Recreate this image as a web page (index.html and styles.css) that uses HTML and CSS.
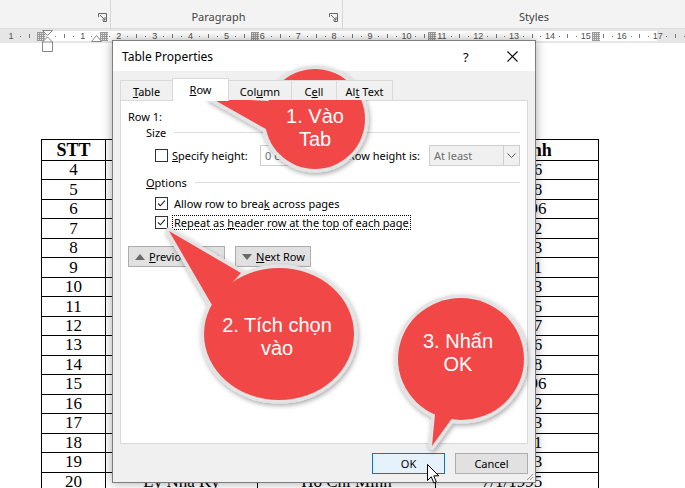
FILE: index.html
```html
<!DOCTYPE html>
<html lang="vi">
<head>
<meta charset="utf-8">
<title>Table Properties</title>
<link rel="stylesheet" href="styles.css">
</head>
<body>
<div class="ribbon">
  <div class="grp g1">
    <svg class="launch" viewBox="0 0 9 9"><path d="M0.5 4 V0.5 H8.5 V8.5 H5" fill="none" stroke="#666"/><path d="M2 2 L7 7 M7 4 V7 H4" fill="none" stroke="#666"/></svg>
  </div>
  <div class="grp g2">
    <span class="glabel">Paragraph</span>
    <svg class="launch" viewBox="0 0 9 9"><path d="M0.5 4 V0.5 H8.5 V8.5 H5" fill="none" stroke="#666"/><path d="M2 2 L7 7 M7 4 V7 H4" fill="none" stroke="#666"/></svg>
  </div>
  <div class="grp g3"><span class="glabel">Styles</span></div>
</div>

<div class="ruler">
  <div class="rtrack">
    <div class="rc"><span class="rn">1</span><i class="d"></i><i class="t"></i><i class="d"></i></div>
    <div class="rc"><span class="rn"></span><i class="d"></i><i class="t"></i><i class="d"></i></div>
    <div class="rc"><span class="rn">1</span><i class="d"></i><i class="t"></i><i class="d"></i></div>
    <div class="rc"><span class="rn">2</span><i class="d"></i><i class="t"></i><i class="d"></i></div>
    <div class="rc"><span class="rn">3</span><i class="d"></i><i class="t"></i><i class="d"></i></div>
    <div class="rc"><span class="rn">4</span><i class="d"></i><i class="t"></i><i class="d"></i></div>
    <div class="rc"><span class="rn">5</span><i class="d"></i><i class="t"></i><i class="d"></i></div>
    <div class="rc"><span class="rn">6</span><i class="d"></i><i class="t"></i><i class="d"></i></div>
    <div class="rc"><span class="rn">7</span><i class="d"></i><i class="t"></i><i class="d"></i></div>
    <div class="rc"><span class="rn">8</span><i class="d"></i><i class="t"></i><i class="d"></i></div>
    <div class="rc"><span class="rn">9</span><i class="d"></i><i class="t"></i><i class="d"></i></div>
    <div class="rc"><span class="rn">10</span><i class="d"></i><i class="t"></i><i class="d"></i></div>
    <div class="rc"><span class="rn">11</span><i class="d"></i><i class="t"></i><i class="d"></i></div>
    <div class="rc"><span class="rn">12</span><i class="d"></i><i class="t"></i><i class="d"></i></div>
    <div class="rc"><span class="rn">13</span><i class="d"></i><i class="t"></i><i class="d"></i></div>
    <div class="rc"><span class="rn">14</span><i class="d"></i><i class="t"></i><i class="d"></i></div>
    <div class="rc"><span class="rn">15</span><i class="d"></i><i class="t"></i><i class="d"></i></div>
    <div class="rc"><span class="rn">16</span><i class="d"></i><i class="t"></i><i class="d"></i></div>
    <div class="rc"><span class="rn">17</span><i class="d"></i><i class="t"></i><i class="d"></i></div>
  </div>
  <span class="hatch h1"></span>
  <span class="hatch h2"></span>
  <span class="hatch h3"></span>
  <span class="hatch h4"></span>
  <span class="hatch h5"></span>
  <svg class="indent" viewBox="0 0 11 22"><path d="M0.5 0.5 H10.5 L5.5 5.5 Z" fill="#fff" stroke="#888"/><path d="M5.5 7 L10.5 12 V21.5 H0.5 V12 Z" fill="#fff" stroke="#888"/><path d="M0.5 12 H10.5" stroke="#888"/></svg>
  <svg class="rindent" viewBox="0 0 11 7"><path d="M5.5 0.5 L10.5 6.5 H0.5 Z" fill="#fff" stroke="#888"/></svg>
</div>

<div class="page">
  <table class="tbl">
    <tr class="hd"><td class="c1">STT</td><td class="c2">Họ và tên</td><td class="c3">Quê quán</td><td class="c4">Năm sinh</td></tr>
    <tr><td>4</td><td>Nguyễn Văn An</td><td>Hà Nội</td><td>5/6/1996</td></tr>
    <tr><td>5</td><td>Trần Thị Bình</td><td>Hải Phòng</td><td>2/9/1998</td></tr>
    <tr><td>6</td><td>Lê Văn Cường</td><td>Đà Nẵng</td><td>12/3/1996</td></tr>
    <tr><td>7</td><td>Phạm Thị Dung</td><td>Huế</td><td>3/8/1992</td></tr>
    <tr><td>8</td><td>Hoàng Văn Em</td><td>Nghệ An</td><td>9/2/1993</td></tr>
    <tr><td>9</td><td>Vũ Thị Hoa</td><td>Nam Định</td><td>4/4/1991</td></tr>
    <tr><td>10</td><td>Đặng Văn Hùng</td><td>Thái Bình</td><td>6/5/1993</td></tr>
    <tr><td>11</td><td>Bùi Thị Lan</td><td>Cần Thơ</td><td>1/7/1995</td></tr>
    <tr><td>12</td><td>Đỗ Văn Long</td><td>Quảng Ninh</td><td>8/3/1997</td></tr>
    <tr><td>13</td><td>Ngô Thị Mai</td><td>Bắc Ninh</td><td>5/6/1996</td></tr>
    <tr><td>14</td><td>Dương Văn Nam</td><td>Hà Nam</td><td>2/9/1998</td></tr>
    <tr><td>15</td><td>Lý Thị Oanh</td><td>Lạng Sơn</td><td>12/3/1996</td></tr>
    <tr><td>16</td><td>Trịnh Văn Phúc</td><td>Thanh Hóa</td><td>3/8/1992</td></tr>
    <tr><td>17</td><td>Đinh Thị Quỳnh</td><td>Ninh Bình</td><td>9/2/1993</td></tr>
    <tr><td>18</td><td>Mai Văn Sơn</td><td>Vĩnh Phúc</td><td>4/4/1991</td></tr>
    <tr><td>19</td><td>Tạ Thị Thu</td><td>Hà Tĩnh</td><td>6/5/1993</td></tr>
    <tr><td>20</td><td>Lý Nhã Kỳ</td><td>Hồ Chí Minh</td><td>7/1/1995</td></tr>
  </table>
</div>

<div class="dialog">
  <div class="titlebar">
    <span class="title">Table Properties</span>
    <span class="help">?</span>
    <svg class="close" viewBox="0 0 11 11"><path d="M0.5 0.5 L10.5 10.5 M10.5 0.5 L0.5 10.5" stroke="#000" stroke-width="1.1"/></svg>
  </div>
  <div class="dbody">
    <div class="tabs">
      <div class="tab t-table"><span><u>T</u>able</span></div>
      <div class="tab t-row sel"><span><u>R</u>ow</span></div>
      <div class="tab t-col"><span>Col<u>u</u>mn</span></div>
      <div class="tab t-cell"><span>C<u>e</u>ll</span></div>
      <div class="tab t-alt"><span>Al<u>t</u> Text</span></div>
    </div>
    <div class="panel">
      <div class="rowlbl">Row 1:</div>
      <div class="grouphead">Size</div>
      <div class="sizerow">
        <span class="cb"></span>
        <span class="lbl-spec"><u>S</u>pecify height:</span>
        <span class="inp">0 cm</span>
        <span class="lbl-rh">Row height is:</span>
        <span class="sel-box"><span class="sel-val">At least</span><span class="sel-arrow"><svg viewBox="0 0 9 5"><path d="M0.5 0.5 L4.5 4.5 L8.5 0.5" fill="none" stroke="#555"/></svg></span></span>
      </div>
      <div class="grouphead opt"><span><u>O</u>ptions</span></div>
      <div class="optrow">
        <span class="cb on"><svg viewBox="0 0 13 13"><path d="M2.5 6.5 L5.2 9.2 L10.5 3.2" fill="none" stroke="#222" stroke-width="1.3"/></svg></span>
        <span class="opttxt">Allow row to brea<u>k</u> across pages</span>
      </div>
      <div class="optrow">
        <span class="cb on"><svg viewBox="0 0 13 13"><path d="M2.5 6.5 L5.2 9.2 L10.5 3.2" fill="none" stroke="#222" stroke-width="1.3"/></svg></span>
        <span class="opttxt focus">Repeat as <u>h</u>eader row at the top of each page</span>
      </div>
      <div class="navrow">
        <span class="btn nav prev"><svg class="tri" viewBox="0 0 10 6"><path d="M0 6 L5 0 L10 6 Z" fill="#6a6a6a"/></svg><span><u>P</u>revious Row</span></span>
        <span class="btn nav next"><svg class="tri" viewBox="0 0 10 6"><path d="M0 0 L10 0 L5 6 Z" fill="#6a6a6a"/></svg><span><u>N</u>ext Row</span></span>
      </div>
    </div>
    <div class="actions">
      <span class="btn act ok">OK</span>
      <span class="btn act">Cancel</span>
    </div>
  </div>
  <svg class="grip" viewBox="0 0 10 10"><path d="M9 3 L3 9 M9 6 L6 9" stroke="#999"/></svg>
</div>

<svg class="bubbles" viewBox="0 0 685 488">
  <defs>
    <filter id="sh" x="-20%" y="-20%" width="140%" height="140%">
      <feDropShadow dx="1" dy="2" stdDeviation="2.5" flood-color="#000" flood-opacity="0.35"/>
    </filter>
  </defs>
  <g filter="url(#sh)">
    <g class="rim">
      <circle cx="315" cy="119" r="50"/>
      <polygon points="211,98 268,101 273,133"/>
      <ellipse cx="279" cy="334" rx="75" ry="66"/>
      <polygon points="169,231 212,305 241,273"/>
      <ellipse cx="461" cy="359" rx="63" ry="61"/>
      <polygon points="432,446 436,404 458,410"/>
    </g>
    <g class="fill">
      <circle cx="315" cy="119" r="50"/>
      <polygon points="211,98 268,101 273,133"/>
      <ellipse cx="279" cy="334" rx="75" ry="66"/>
      <polygon points="169,231 212,305 241,273"/>
      <ellipse cx="461" cy="359" rx="63" ry="61"/>
      <polygon points="432,446 436,404 458,410"/>
    </g>
  </g>
</svg>
<div class="btext bt1">1. Vào<br>Tab</div>
<div class="btext bt2">2. Tích chọn<br>vào</div>
<div class="btext bt3">3. Nhấn<br>OK</div>

<svg class="cursor" viewBox="0 0 13 21"><path d="M0.5 0.5 V16.5 L4.3 12.8 L6.8 19 L9.3 18 L6.8 11.8 H11.8 Z" fill="#fff" stroke="#000" stroke-linejoin="round"/></svg>
</body>
</html>
```

FILE: styles.css
```css
* { box-sizing: border-box; }
html, body { margin: 0; padding: 0; }
body {
  width: 685px;
  height: 488px;
  overflow: hidden;
  position: relative;
  background: #fff;
  font-family: "Noto Sans", "Open Sans", sans-serif;
}

/* ribbon */
.ribbon {
  display: flex;
  height: 29px;
  background: #f3f3f3;
  border-bottom: 1px solid #dcdcdc;
}
.grp {
  position: relative;
  display: flex;
  align-items: flex-end;
  justify-content: center;
  padding-bottom: 4px;
  font-size: 11px;
  color: #444;
}
.g1 { width: 111px; border-right: 1px solid #d6d6d6; }
.g2 { width: 232px; border-right: 1px solid #d6d6d6; padding-right: 16px; }
.g3 { flex: 1; padding-left: 40px; }
.launch {
  position: absolute;
  right: 3px;
  bottom: 6px;
  width: 9px;
  height: 9px;
}
.g2 .launch { right: 4px; }

/* ruler */
.ruler {
  position: relative;
  height: 14px;
  background: #e6e6e6;
}
.rtrack {
  display: flex;
  height: 14px;
  padding-left: 6.6px;
  background: linear-gradient(to right, transparent 47px, #fff 47px, #fff 657px, transparent 657px) 0 2px / 100% 10px no-repeat;
}
.rc {
  flex: 0 0 35.9px;
  display: grid;
  grid-template-columns: repeat(4, 1fr);
  align-items: center;
  justify-items: center;
}
.rn {
  font-family: "Liberation Sans", sans-serif;
  font-size: 9px;
  color: #505050;
  line-height: 14px;
}
.rc .d { width: 1px; height: 1px; background: #777; }
.rc .t { width: 1px; height: 4px; background: #777; }
.hatch {
  position: absolute;
  top: 3px;
  width: 8px;
  height: 9px;
  margin-left: -4px;
  background:
    repeating-linear-gradient(to right, #999 0 1px, transparent 1px 2px),
    repeating-linear-gradient(to bottom, #999 0 1px, #e6e6e6 1px 2px);
}
.h1 { left: 41px; }
.h2 { left: 104px; }
.h3 { left: 255px; }
.h4 { left: 432px; }
.h5 { left: 596px; }
.indent {
  position: absolute;
  left: 42px;
  top: 1px;
  width: 11px;
  height: 22px;
}
.rindent {
  position: absolute;
  left: 91px;
  top: 6px;
  width: 11px;
  height: 7px;
}

/* document table */
.page {
  padding: 96px 0 0 41px;
}
.tbl {
  border-collapse: collapse;
  font-family: "Liberation Serif", serif;
  font-size: 17px;
  table-layout: fixed;
  width: 557px;
}
.tbl td {
  border: 1px solid #000;
  padding: 0;
  text-align: center;
  height: 19.47px;
  line-height: 18px;
  white-space: nowrap;
  overflow: hidden;
}
.tbl td:last-child { padding-right: 10px; }
.tbl .hd td { height: 21px; font-weight: bold; font-size: 18px; }
.tbl .hd td:last-child { padding-right: 4px; }
.c1 { width: 64px; }
.c2 { width: 152px; }
.c3 { width: 178px; }
.c4 { width: 163px; }

/* dialog */
.dialog {
  position: absolute;
  left: 112px;
  top: 40px;
  width: 424px;
  height: 443px;
  border: 1px solid #7d7d7d;
  background: #f0f0f0;
  box-shadow: 0 0 10px rgba(0,0,0,0.35);
  font-size: 11px;
  color: #000;
}
.titlebar {
  position: relative;
  height: 30px;
  background: #fff;
  display: flex;
  align-items: center;
  padding-left: 9px;
}
.title { font-size: 12px; }
.help {
  position: absolute;
  left: 350px;
  top: 7px;
  font-size: 13px;
}
.close {
  position: absolute;
  left: 394px;
  top: 10px;
  width: 11px;
  height: 11px;
}
.dbody {
  padding: 7px 7px 0 7px;
}
.tabs {
  display: flex;
  align-items: flex-end;
  height: 22px;
  position: relative;
  z-index: 2;
}
.tab {
  height: 20px;
  border: 1px solid #d9d9d9;
  border-bottom: none;
  margin-right: -1px;
  background: #f0f0f0;
  display: flex;
  align-items: center;
  justify-content: center;
  padding-top: 1px;
}
.tab.sel {
  height: 23px;
  background: #fff;
  margin-bottom: -1px;
  position: relative;
  z-index: 3;
  padding-bottom: 2px;
}
.t-table { width: 53px; }
.t-row { width: 57px; }
.t-col { width: 64px; }
.t-cell { width: 46px; }
.t-alt { width: 57px; }
.panel {
  height: 344px;
  background: #fff;
  border: 1px solid #d9d9d9;
  padding: 8px 7px 0 7px;
}
.rowlbl { height: 15px; line-height: 15px; }
.grouphead {
  display: flex;
  align-items: center;
  height: 14px;
  margin-top: 1px;
  padding-left: 18px;
}
.grouphead::after {
  content: "";
  flex: 1;
  height: 1px;
  background: #dcdcdc;
  margin-left: 8px;
}
.grouphead.opt { margin-top: 9px; }
.sizerow {
  display: flex;
  align-items: center;
  height: 21px;
  margin-top: 6px;
  padding-left: 27px;
}
.cb {
  flex: 0 0 13px;
  width: 13px;
  height: 13px;
  border: 1px solid #333;
  background: #fff;
  margin-right: 4px;
  display: flex;
}
.cb svg { width: 11px; height: 11px; }
.lbl-spec { width: 88px; }
.inp {
  width: 70px;
  height: 21px;
  border: 1px solid #cfcfcf;
  background: #fff;
  color: #6d6d6d;
  padding-left: 4px;
  line-height: 19px;
}
.lbl-rh { flex: 1; text-align: right; padding-right: 9px; }
.sel-box {
  width: 91px;
  height: 21px;
  border: 1px solid #cfcfcf;
  background: #f0f0f0;
  display: flex;
  color: #6d6d6d;
}
.sel-val { flex: 1; padding-left: 4px; line-height: 19px; }
.sel-arrow {
  width: 16px;
  border-left: 1px solid #cfcfcf;
  display: flex;
  align-items: center;
  justify-content: center;
}
.sel-arrow svg { width: 9px; height: 5px; }
.optrow {
  display: flex;
  align-items: center;
  height: 19px;
  padding-left: 27px;
}
.grouphead.opt + .optrow { margin-top: 5px; }
.opttxt { padding: 0 1px; line-height: 13px; border: 1px solid transparent; }
.opttxt.focus { border: 1px dotted #000; }
.navrow {
  display: flex;
  gap: 10px;
  margin-top: 14px;
}
.btn {
  height: 21px;
  background: #e1e1e1;
  border: 1px solid #adadad;
  display: flex;
  align-items: center;
  justify-content: center;
}
.nav { justify-content: flex-start; padding-left: 6px; }
.prev { width: 97px; }
.next { width: 76px; }
.tri { width: 10px; height: 6px; margin-right: 4px; }
.actions {
  display: flex;
  justify-content: flex-end;
  gap: 10px;
  margin-top: 9px;
}
.act { width: 73px; }
.ok { background: #e5f1fb; border-color: #0078d7; }
.grip {
  position: absolute;
  right: 1px;
  bottom: 1px;
  width: 10px;
  height: 10px;
}

/* callouts */
.bubbles {
  position: absolute;
  left: 0;
  top: 0;
  width: 685px;
  height: 488px;
}
.rim * { fill: #e3e3e3; stroke: #e3e3e3; stroke-width: 7; stroke-linejoin: round; }
.fill * { fill: #f24747; }
.btext {
  position: absolute;
  width: 160px;
  text-align: center;
  color: #fff;
  font-family: "Liberation Sans", Arial, sans-serif;
  font-size: 20px;
  line-height: 23px;
}
.bt1 { left: 235px; top: 105px; }
.bt2 { left: 197px; top: 314px; }
.bt3 { left: 378px; top: 330px; }

.cursor {
  position: absolute;
  left: 427px;
  top: 464px;
  width: 13px;
  height: 21px;
}
```
